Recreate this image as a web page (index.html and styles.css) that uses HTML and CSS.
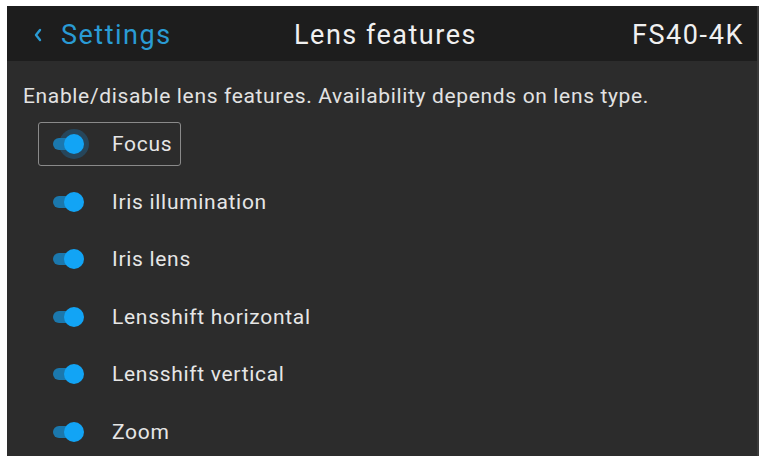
FILE: index.html
```html
<!DOCTYPE html>
<html lang="en">

<head>
    <meta charset="UTF-8">
    <meta name="viewport" content="width=device-width, initial-scale=1.0">
    <title>Lens features</title>
    <link rel="stylesheet" href="styles.css">
</head>

<body>

    <div class="screen">
        <div class="header">
            <div class="back">
                <svg class="chevron" width="10" height="16" viewBox="0 0 10 16">
                    <path d="M7 3 L3 8 L7 13" fill="none" stroke="#2a9bd4" stroke-width="2.4" stroke-linecap="round" stroke-linejoin="round"/>
                </svg>
                <span>Settings</span>
            </div>
            <div class="title">Lens features</div>
            <div class="model">FS40-4K</div>
        </div>

        <div class="content">
            <p class="hint">Enable/disable lens features. Availability depends on lens type.</p>

            <div class="list">
                <div class="row selected">
                    <span class="toggle on"><span class="knob"></span></span>
                    <span class="label">Focus</span>
                </div>
                <div class="row">
                    <span class="toggle on"><span class="knob"></span></span>
                    <span class="label">Iris illumination</span>
                </div>
                <div class="row">
                    <span class="toggle on"><span class="knob"></span></span>
                    <span class="label">Iris lens</span>
                </div>
                <div class="row">
                    <span class="toggle on"><span class="knob"></span></span>
                    <span class="label">Lensshift horizontal</span>
                </div>
                <div class="row">
                    <span class="toggle on"><span class="knob"></span></span>
                    <span class="label">Lensshift vertical</span>
                </div>
                <div class="row">
                    <span class="toggle on"><span class="knob"></span></span>
                    <span class="label">Zoom</span>
                </div>
            </div>
        </div>
    </div>

</body>

</html>
```

FILE: styles.css
```css
body {
    margin: 0;
    padding: 6px 3px 0 7px;
    background-color: #ffffff;
    font-family: 'Roboto', 'Liberation Sans', sans-serif;
    height: 456px;
    box-sizing: border-box;
    overflow: hidden;
}

.screen {
    background-color: #2c2c2c;
    height: 100%;
    border-right: 2px solid #3a3a3a;
    overflow: hidden;
}

.header {
    display: flex;
    align-items: center;
    justify-content: space-between;
    height: 55px;
    padding: 3px 13px 0 26px;
    box-sizing: border-box;
    background-color: #1d1d1d;
    font-size: 27px;
    letter-spacing: 1.5px;
}

.back {
    display: flex;
    align-items: center;
    gap: 18px;
    color: #2a9bd4;
    width: 200px;
}

.title {
    color: #f0f0f0;
    flex: 1;
    text-align: center;
    padding-right: 46px;
}

.model {
    color: #f0f0f0;
    width: 160px;
    text-align: right;
    letter-spacing: 1.6px;
}

.content {
    padding: 0 0 0 16px;
}

.hint {
    margin: 0;
    padding-top: 23px;
    font-size: 21px;
    color: #e2e2e2;
    letter-spacing: 0.65px;
}

.list {
    display: flex;
    flex-direction: column;
    margin-top: 14px;
}

.row {
    display: flex;
    align-items: center;
    height: 42px;
    margin-bottom: 13.6px;
    margin-left: 15px;
    padding: 0 8px 0 14px;
    align-self: flex-start;
    border: 1px solid transparent;
    border-radius: 3px;
}

.row.selected {
    border-color: #8a8a8a;
}

.toggle {
    position: relative;
    display: inline-block;
    width: 26px;
    height: 12px;
    border-radius: 6px;
    background-color: #1b78ad;
    margin-right: 33px;
}

.toggle .knob {
    position: absolute;
    top: -4px;
    left: 11px;
    width: 20px;
    height: 20px;
    border-radius: 50%;
    background-color: #12a4f5;
}

.selected .toggle .knob {
    box-shadow: 0 0 0 5px rgba(30, 120, 180, 0.35);
}

.label {
    font-size: 21px;
    color: #e6e6e6;
    letter-spacing: 0.7px;
}
```
